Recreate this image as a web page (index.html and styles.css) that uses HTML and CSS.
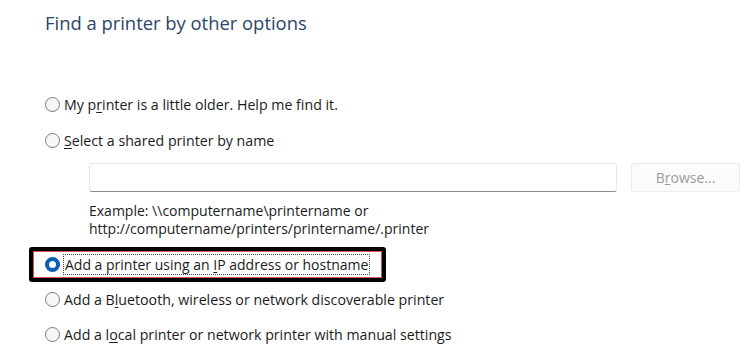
FILE: index.html
```html
<!DOCTYPE html>
<html lang="en">

<head>
  <meta charset="UTF-8" />
  <title>Add Printer</title>
  <link rel="stylesheet" href="styles.css">
</head>

<body>
  <div class="page">
    <h1 class="title">Find a printer by other options</h1>

    <div class="options">
      <label class="option">
        <span class="radio"></span>
        <span class="label">My p<u>r</u>inter is a little older. Help me find it.</span>
      </label>

      <label class="option">
        <span class="radio"></span>
        <span class="label"><u>S</u>elect a shared printer by name</span>
      </label>

      <div class="shared">
        <div class="shared-row">
          <div class="path-input"></div>
          <button class="browse" disabled>B<u>r</u>owse...</button>
        </div>
        <div class="example">
          <div>Example: \\computername\printername or</div>
          <div>http://computername/printers/printername/.printer</div>
        </div>
      </div>

      <!-- highlighted option -->
      <div class="highlight">
        <label class="option selected">
          <span class="radio checked"></span>
          <span class="label focus">Add a printer using an <u>I</u>P address or hostname</span>
        </label>
      </div>

      <label class="option after">
        <span class="radio"></span>
        <span class="label">Add a B<u>l</u>uetooth, wireless or network discoverable printer</span>
      </label>

      <label class="option">
        <span class="radio"></span>
        <span class="label">Add a l<u>o</u>cal printer or network printer with manual settings</span>
      </label>
    </div>
  </div>
</body>

</html>
```

FILE: styles.css
```css
body {
  margin: 0;
  background: #fff;
  font-family: 'Open Sans', 'Noto Sans', sans-serif;
  color: #1b1b1b;
}

.page {
  padding: 11px 0 0 45px;
}

.title {
  margin: 0;
  font-size: 18.4px;
  font-weight: 400;
  line-height: 24px;
  color: #2b4468;
}

.options {
  display: flex;
  flex-direction: column;
  margin-top: 51px;
}

.option {
  display: flex;
  align-items: center;
  height: 36px;
  font-size: 14.2px;
}

.option.after {
  height: 34px;
}

.radio {
  box-sizing: border-box;
  width: 15px;
  height: 15px;
  border: 1px solid #7a7a7a;
  border-radius: 50%;
  background: #f7f7f7;
  margin-right: 4px;
  flex-shrink: 0;
}

.radio.checked {
  border: 4px solid #0a5fb4;
  background: #fff;
}

.label u {
  text-decoration-thickness: 1px;
  text-underline-offset: 2px;
}

.shared {
  padding-left: 44px;
  margin-top: 5px;
}

.shared-row {
  display: flex;
  gap: 14px;
}

.path-input {
  width: 528px;
  height: 29px;
  box-sizing: border-box;
  border: 1px solid #e6e6e6;
  border-bottom: 1px solid #8a8a8a;
  border-radius: 3px;
}

.browse {
  width: 109px;
  height: 29px;
  box-sizing: border-box;
  border: 1px solid #ececec;
  border-radius: 3px;
  background: #fbfbfb;
  font-family: inherit;
  font-size: 14px;
  color: #9a9a9a;
}

.example {
  margin-top: 10px;
  font-size: 14px;
  line-height: 18px;
  color: #1b1b1b;
}

.highlight {
  margin: 9px 0 0 -16px;
  width: 357px;
  height: 35px;
  box-sizing: border-box;
  border: 4px solid #000;
  border-radius: 3px;
  box-shadow: inset 0 0 0 1px #d9535b;
  padding-left: 12px;
}

.highlight .option {
  height: 27px;
  font-size: 14px;
}

.label.focus {
  outline: 1px dotted #444;
  outline-offset: 0;
  padding: 0 1px;
}
```
